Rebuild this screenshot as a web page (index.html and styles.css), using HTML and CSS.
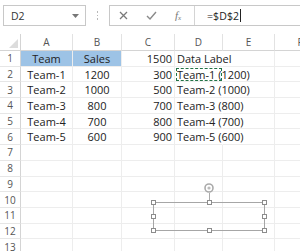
FILE: index.html
```html
<!DOCTYPE html>
<html>
<head>
<meta charset="utf-8">
<link rel="stylesheet" href="styles.css">
</head>
<body>
<div class="app">
  <div class="fbar">
    <div class="namebox">
      <span class="nb-text">D2</span>
      <svg class="nb-arrow" width="7" height="4" viewBox="0 0 7 4"><path d="M0 0 H7 L3.5 4 Z" fill="#777"/></svg>
    </div>
    <div class="dots"><i></i><i></i><i></i></div>
    <div class="formula">
      <div class="btns">
        <svg class="ico" width="9" height="9" viewBox="0 0 9 9"><path d="M1 1 L8 8 M8 1 L1 8" stroke="#7a7a7a" stroke-width="1.3" fill="none"/></svg>
        <svg class="ico" width="11" height="9" viewBox="0 0 11 9"><path d="M1 5 L4 8 L10 1" stroke="#8a8a8a" stroke-width="1.4" fill="none"/></svg>
        <span class="fx">f<sub>x</sub></span>
      </div>
      <div class="input"><span class="ftext">=$D$2</span><span class="caret"></span></div>
    </div>
  </div>

  <div class="sheet">
    <div class="corner"><svg width="9" height="9" viewBox="0 0 9 9"><path d="M9 0 V9 H0 Z" fill="#dcdcdc"/></svg></div>
    <div class="ch">A</div><div class="ch">B</div><div class="ch">C</div><div class="ch">D</div><div class="ch">E</div><div class="ch last">F</div>

    <div class="rh">1</div><div class="c fill ctr">Team</div><div class="c fill ctr">Sales</div><div class="c num">1500</div><div class="c txt spill">Data Label</div><div class="c"></div><div class="c"></div>
    <div class="rh">2</div><div class="c ctr">Team-1</div><div class="c ctr">1200</div><div class="c num">300</div><div class="c txt spill sel">Team-1 (1200)</div><div class="c"></div><div class="c"></div>
    <div class="rh">3</div><div class="c ctr">Team-2</div><div class="c ctr">1000</div><div class="c num">500</div><div class="c txt spill">Team-2 (1000)</div><div class="c"></div><div class="c"></div>
    <div class="rh">4</div><div class="c ctr">Team-3</div><div class="c ctr">800</div><div class="c num">700</div><div class="c txt spill">Team-3 (800)</div><div class="c"></div><div class="c"></div>
    <div class="rh">5</div><div class="c ctr">Team-4</div><div class="c ctr">700</div><div class="c num">800</div><div class="c txt spill">Team-4 (700)</div><div class="c"></div><div class="c"></div>
    <div class="rh">6</div><div class="c ctr">Team-5</div><div class="c ctr">600</div><div class="c num">900</div><div class="c txt spill">Team-5 (600)</div><div class="c"></div><div class="c"></div>
    <div class="rh">7</div><div class="c"></div><div class="c"></div><div class="c"></div><div class="c"></div><div class="c"></div><div class="c"></div>
    <div class="rh">8</div><div class="c"></div><div class="c"></div><div class="c"></div><div class="c"></div><div class="c"></div><div class="c"></div>
    <div class="rh">9</div><div class="c"></div><div class="c"></div><div class="c"></div><div class="c"></div><div class="c"></div><div class="c"></div>
    <div class="rh">10</div><div class="c"></div><div class="c"></div><div class="c"></div><div class="c"></div><div class="c"></div><div class="c"></div>
    <div class="rh">11</div><div class="c"></div><div class="c"></div><div class="c"></div><div class="c"></div><div class="c"></div><div class="c"></div>
    <div class="rh">12</div><div class="c"></div><div class="c"></div><div class="c"></div><div class="c"></div><div class="c"></div><div class="c"></div>
    <div class="rh">13</div><div class="c"></div><div class="c"></div><div class="c"></div><div class="c"></div><div class="c"></div><div class="c"></div>
  </div>

  <div class="shape">
    <div class="rot">
      <svg width="10" height="10" viewBox="0 0 10 10"><circle cx="5" cy="5" r="4" fill="none" stroke="#aaa" stroke-width="1.6"/><circle cx="5" cy="5" r="1.6" fill="#bbb"/></svg>
    </div>
    <div class="rotline"></div>
    <i class="h tl"></i><i class="h tm"></i><i class="h tr"></i>
    <i class="h ml"></i><i class="h mr"></i>
    <i class="h bl"></i><i class="h bm"></i><i class="h br"></i>
  </div>
</div>
</body>
</html>
```

FILE: styles.css
```css
* { box-sizing: border-box; }
html, body { margin: 0; padding: 0; background: #fff; }
body { width: 300px; height: 251px; overflow: hidden; font-family: "Open Sans", "Noto Sans", sans-serif; color: #222; }

.app { position: relative; width: 300px; height: 251px; overflow: hidden; }

.fbar { height: 34px; display: flex; align-items: flex-start; padding-top: 5px; padding-left: 3px; }
.namebox { width: 83px; height: 21px; border: 1px solid #c8c8c8; display: flex; align-items: center; justify-content: space-between; padding: 0 6px 0 7px; }
.nb-text { font-size: 10.5px; color: #333; }
.nb-arrow { margin-top: 1px; }
.dots { width: 23px; height: 21px; display: flex; flex-direction: column; align-items: center; justify-content: center; gap: 2px; }
.dots i { width: 1.5px; height: 1.5px; background: #b8b8b8; display: block; }
.formula { flex: 1; height: 21px; border: 1px solid #c8c8c8; border-right: none; display: flex; }
.btns { width: 85px; border-right: 1px solid #d4d4d4; display: flex; align-items: center; padding-left: 9px; gap: 18px; }
.fx { font-family: "Liberation Serif", serif; font-style: italic; font-size: 11px; color: #777; }
.fx sub { font-size: 7px; vertical-align: -1px; }
.input { display: flex; align-items: center; padding-left: 12px; }
.ftext { font-size: 10.5px; color: #222; letter-spacing: 0.1px; }
.caret { width: 1px; height: 13px; background: #222; margin-left: 1px; }

.sheet { display: grid; grid-template-columns: 21px 52px 49px 53px 48px 52px 50px; grid-template-rows: 17px repeat(13, 15.7px); font-size: 11px; }
.corner { border-right: 1px solid #d4d4d4; border-bottom: 1px solid #d4d4d4; display: flex; align-items: flex-end; justify-content: flex-end; padding: 0 2px 2px 0; }
.ch { border-right: 1px solid #e2e2e2; border-bottom: 1px solid #d4d4d4; font-size: 10px; color: #555; display: flex; align-items: center; justify-content: center; }
.ch.last { border-right: none; }
.rh { border-right: 1px solid #d4d4d4; border-bottom: 1px solid #e6e6e6; font-size: 10px; color: #555; display: flex; align-items: center; justify-content: center; }
.c { border-right: 1px solid #ededed; border-bottom: 1px solid #ededed; display: flex; align-items: center; white-space: nowrap; line-height: 1; }
.c.fill { background: #9dc3e6; }
.c.ctr { justify-content: center; }
.c.num { justify-content: flex-end; padding-right: 2px; }
.c.txt { padding-left: 2px; overflow: visible; }
.c.spill { border-right-color: transparent; position: relative; z-index: 1; }
.c.sel { outline: 1px dashed #217346; outline-offset: -2px; }

.shape { position: absolute; left: 153px; top: 202px; width: 112px; height: 29px; border: 1px solid #a6a6a6; }
.h { position: absolute; width: 5px; height: 5px; background: #fff; border: 1px solid #8c8c8c; display: block; }
.tl { left: -3px; top: -3px; } .tm { left: 53px; top: -3px; } .tr { right: -3px; top: -3px; }
.ml { left: -3px; top: 11px; } .mr { right: -3px; top: 11px; }
.bl { left: -3px; bottom: -3px; } .bm { left: 53px; bottom: -3px; } .br { right: -3px; bottom: -3px; }
.rot { position: absolute; left: 50px; top: -20px; width: 10px; height: 10px; }
.rot svg { display: block; }
.rotline { position: absolute; left: 55px; top: -10px; width: 1px; height: 7px; background: #aaa; }
```
